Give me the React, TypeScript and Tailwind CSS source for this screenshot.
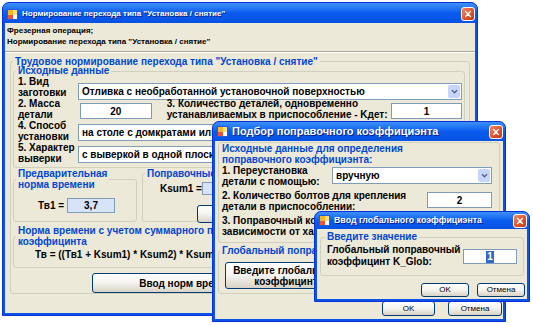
import type { ReactNode } from 'react';

// XP style overlapping dialogs: "Нормирование перехода" + two child dialogs

function AppIcon() {
  return (
    <svg viewBox="0 0 11 11" className="h-[11px] w-[11px] shrink-0">
      <rect x="0" y="0" width="11" height="11" fill="#2a5bd7" />
      <rect x="1" y="1" width="5" height="5" fill="#f7b32b" />
      <rect x="6" y="1" width="4" height="5" fill="#fbe37a" />
      <rect x="1" y="6" width="5" height="4" fill="#e9553a" />
      <rect x="6" y="6" width="4" height="4" fill="#ffffff" />
    </svg>
  );
}

function CloseButton() {
  return (
    <div className="flex h-[14px] w-[14px] shrink-0 items-center justify-center rounded-[3px] border border-white bg-linear-to-br from-[#ef8a68] via-[#e0572f] to-[#c23a10]">
      <svg viewBox="0 0 10 10" className="h-[8px] w-[8px]">
        <path d="M2 2L8 8M8 2L2 8" stroke="white" strokeWidth="1.8" strokeLinecap="round" />
      </svg>
    </div>
  );
}

function XpWindow({
  title,
  className,
  barClass,
  titleClass,
  children,
}: {
  title: string;
  className: string;
  barClass: string;
  titleClass: string;
  children: ReactNode;
}) {
  return (
    <div
      className={`absolute flex flex-col overflow-hidden rounded-t-[7px] border border-[#0831d9] bg-[#0a53e4] ${className}`}
    >
      <div
        className={`flex shrink-0 items-center bg-linear-to-b from-[#3d8ff8] via-[#0a5cee] to-[#0651e2] pl-[4px] pr-[2px] ${barClass}`}
      >
        <AppIcon />
        <span
          className={`ml-[4px] flex-1 truncate font-bold text-white [text-shadow:1px_1px_0_#0a1e8c] ${titleClass}`}
        >
          {title}
        </span>
        <CloseButton />
      </div>
      <div className="mx-[2px] mb-[2px] flex-1 bg-[#ece9d8]">{children}</div>
    </div>
  );
}

function TextBox({ value, className, readOnly }: { value: string; className: string; readOnly?: boolean }) {
  return (
    <div
      className={`flex shrink-0 items-center justify-center border border-[#7f9db9] text-[10px] font-bold ${
        readOnly ? 'bg-[#d6e3f8]' : 'bg-white'
      } ${className}`}
    >
      {value}
    </div>
  );
}

function Combo({ value, className }: { value: string; className: string }) {
  return (
    <div className={`flex h-[17px] shrink-0 items-center border border-[#7f9db9] bg-white ${className}`}>
      <span className="flex-1 truncate pl-[3px] text-[10px] font-bold">{value}</span>
      <div className="mr-[1px] flex h-[13px] w-[12px] items-center justify-center rounded-[2px] bg-[#c5d5fb]">
        <svg viewBox="0 0 8 6" className="h-[5px] w-[7px]">
          <path d="M1 1.5L4 4.5L7 1.5" stroke="#4d6185" strokeWidth="1.6" fill="none" />
        </svg>
      </div>
    </div>
  );
}

function XpButton({ children, className }: { children: ReactNode; className: string }) {
  return (
    <div
      className={`flex shrink-0 items-center justify-center rounded-[3px] border border-[#003c74] bg-linear-to-b from-white via-[#f4f3ee] to-[#d9d3c6] text-center ${className}`}
    >
      {children}
    </div>
  );
}

const blue = 'text-[#0046d5]';

export default function App() {
  return (
    <div className="relative h-[325px] w-[533px] overflow-hidden bg-white font-['Liberation_Sans',Arial,sans-serif] text-black">
      {/* main window */}
      <XpWindow
        className="left-[2px] top-[2px] h-[314px] w-[476px]"
        barClass="h-[20px] pt-[2px]"
        titleClass="text-[8px]"
        title='Нормирование перехода типа "Установка / снятие"'
      >
        <div className="h-[28px] pl-[2px] pt-[2px] text-[8px] font-bold leading-[11px]">
          <div>Фрезерная операция;</div>
          <div>Нормирование перехода типа "Установка / снятие"</div>
        </div>
        <div className="h-[2px] border-t border-b border-t-[#aca899] border-b-white" />

        <fieldset className="ml-[5px] mt-[2px] h-[239px] w-[460px] min-w-0 rounded-[3px] border border-[#d0d0bf] px-[2px]">
          <legend className={`px-[2px] text-[10px] font-bold leading-[13px] ${blue}`}>
            Трудовое нормирование перехода типа "Установка / снятие"
          </legend>

          <fieldset className="-mt-[2px] w-[452px] min-w-0 rounded-[3px] border border-[#d0d0bf] px-[2px] pb-[3px]">
            <legend className={`px-[2px] text-[10px] font-bold leading-[10px] ${blue}`}>Исходные данные</legend>
            <div className="flex flex-col pl-[2px] text-[10px] font-bold leading-[11px]">
              <div className="flex h-[22px] items-start">
                <div className="w-[62px]">
                  1. Вид
                  <br />
                  заготовки
                </div>
                <Combo className="mt-[7px] w-[384px]" value="Отливка с необработанной установочной поверхностью" />
              </div>
              <div className="flex h-[22px] items-start">
                <div className="w-[62px]">
                  2. Масса
                  <br />
                  детали
                </div>
                <TextBox className="mt-[5px] h-[16px] w-[72px]" value="20" />
                <div className="ml-[15px] w-[225px]">
                  3. Количество деталей, одновременно
                  <br />
                  устанавливаемых в приспособление - Kдет:
                </div>
                <TextBox className="mt-[5px] h-[16px] w-[71px]" value="1" />
              </div>
              <div className="flex h-[22px] items-start">
                <div className="w-[62px]">
                  4. Способ
                  <br />
                  установки
                </div>
                <Combo className="mt-[4px] w-[384px]" value="на столе с домкратами или прихватами" />
              </div>
              <div className="flex h-[22px] items-start">
                <div className="w-[62px]">
                  5. Характер
                  <br />
                  выверки
                </div>
                <Combo className="mt-[4px] w-[384px]" value="с выверкой в одной плоскости" />
              </div>
            </div>
          </fieldset>

          <div className="flex gap-[5px]">
            <fieldset className="h-[54px] w-[124px] min-w-0 rounded-[3px] border border-[#d0d0bf] px-[2px]">
              <legend className={`px-[2px] text-[10px] font-bold leading-[11px] ${blue}`}>
                Предварительная
                <br />
                норма времени
              </legend>
              <div className="mt-[8px] flex items-center text-[10px] font-bold">
                <span className="ml-[22px] w-[29px]">Тв1 =</span>
                <TextBox readOnly className="h-[15px] w-[48px]" value="3,7" />
              </div>
            </fieldset>
            <fieldset className="h-[54px] flex-1 min-w-0 rounded-[3px] border border-[#d0d0bf] px-[2px]">
              <legend className={`px-[2px] text-[10px] font-bold leading-[11px] ${blue}`}>
                Поправочные коэффициэнты
              </legend>
              <div className="mt-[2px] flex items-center text-[10px] font-bold">
                <span className="ml-[15px] w-[42px]">Ksum1 =</span>
                <TextBox readOnly className="h-[13px] w-[50px]" value="1" />
              </div>
              <XpButton className="ml-[52px] mt-[9px] h-[18px] w-[90px] text-[10px] font-bold">Подбор</XpButton>
            </fieldset>
          </div>

          <fieldset className="mt-[3px] h-[43px] w-[452px] min-w-0 rounded-[3px] border border-[#d0d0bf] px-[2px]">
            <legend className={`px-[2px] text-[10px] font-bold leading-[11px] ${blue}`}>
              Норма времени с учетом суммарного поправочного
              <br />
              коэффицинта
            </legend>
            <div className="mt-[2px] pl-[19px] text-[10px] font-bold leading-[12px]">
              Тв = ((Тв1 + Ksum1) * Ksum2) * Ksum3 * K_Glob = 3,7
            </div>
          </fieldset>

          <XpButton className="ml-[79px] mt-[5px] h-[20px] w-[194px] text-[10px] font-bold">Ввод норм времени</XpButton>
        </fieldset>
      </XpWindow>

      {/* dialog 2 */}
      <XpWindow
        className="left-[212px] top-[121px] h-[201px] w-[294px]"
        barClass="h-[19px]"
        titleClass="text-[11px]"
        title="Подбор поправочного коэффициэнта"
      >
        <div className="ml-[3px] mt-[1px] h-[101px] w-[282px] rounded-[3px] border border-[#d0d0bf] pl-[3px] text-[10px] font-bold leading-[11px]">
          <div className={blue}>
            Исходные данные для определения
            <br />
            поправочного коэффициэнта:
          </div>
          <div className="flex items-start">
            <div className="w-[110px]">
              1. Переустановка
              <br />
              детали с помощью:
            </div>
            <Combo className="mt-[2px] w-[160px]" value="вручную" />
          </div>
          <div className="mt-[3px] flex items-start">
            <div className="w-[205px]">
              2. Количество болтов для крепления
              <br />
              детали в приспособлении:
            </div>
            <TextBox className="mt-[2px] h-[16px] w-[65px]" value="2" />
          </div>
          <div className="mt-[3px] flex items-start">
            <div className="w-[205px]">
              3. Поправочный коэффициэнт в
              <br />
              зависимости от характера
            </div>
          </div>
        </div>
        <fieldset className="ml-[3px] mt-[1px] w-[282px] min-w-0 rounded-[3px] border border-[#d0d0bf] px-[1px] pb-[4px]">
          <legend className={`px-[2px] text-[10px] font-bold leading-[13px] ${blue}`}>
            Глобальный поправочный коэффициэнт
          </legend>
          <XpButton className="ml-[5px] mt-[5px] h-[27px] w-[122px] text-[10px] font-bold leading-[11px]">
            Введите глобальный
            <br />
            коэффицинт
          </XpButton>
        </fieldset>
        <div className="mt-[7px] flex justify-end gap-[13px] pr-[1px] text-[8px]">
          <XpButton className="h-[15px] w-[53px]">OK</XpButton>
          <XpButton className="h-[15px] w-[54px]">Отмена</XpButton>
        </div>
      </XpWindow>

      {/* dialog 3 */}
      <XpWindow
        className="left-[314px] top-[211px] h-[91px] w-[216px]"
        barClass="h-[17px]"
        titleClass="text-[8.8px]"
        title="Ввод глобального коэффициэнта"
      >
        <fieldset className="ml-[3px] mt-[2px] h-[45px] w-[204px] min-w-0 rounded-[3px] border border-[#d0d0bf] px-[4px]">
          <legend className={`px-[2px] text-[10px] font-bold leading-[12px] ${blue}`}>Введите значение</legend>
          <div className="mt-[1px] flex items-start pl-[2px] text-[10px] font-bold leading-[12px]">
            <div className="w-[136px]">
              Глобальный поправочный
              <br />
              коэффицинт K_Glob:
            </div>
            <div className="mt-[5px] flex h-[15px] w-[54px] items-center justify-center border border-[#7f9db9] bg-white">
              <span className="bg-[#316ac5] px-[1px] text-[10px] font-bold leading-[12px] text-white">1</span>
            </div>
          </div>
        </fieldset>
        <div className="mt-[7px] flex justify-end gap-[8px] pr-[2px] text-[8px]">
          <XpButton className="h-[14px] w-[48px]">OK</XpButton>
          <XpButton className="h-[14px] w-[48px]">Отмена</XpButton>
        </div>
      </XpWindow>
    </div>
  );
}
